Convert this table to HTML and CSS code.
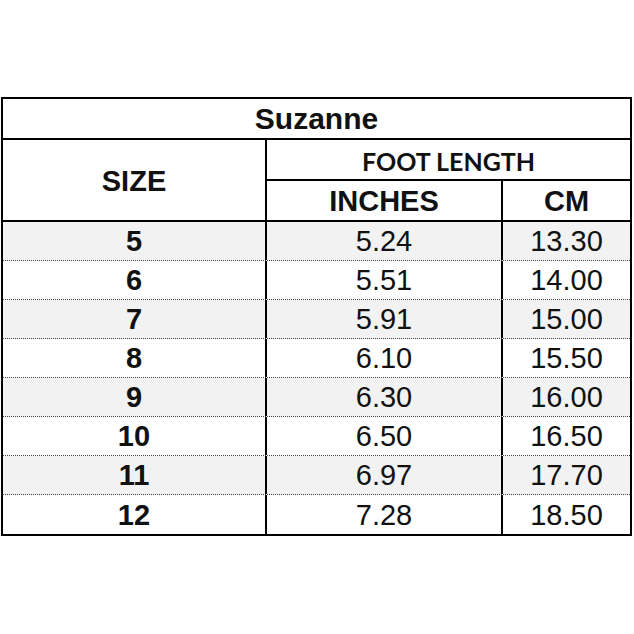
FILE: index.html
```html
<!DOCTYPE html>
<html lang="en">
<head>
<meta charset="utf-8">
<title>Suzanne size chart</title>
<link rel="stylesheet" href="styles.css">
</head>
<body>
<div class="chart">
  <div class="title">Suzanne</div>
  <div class="head">
    <div class="cell size-h">SIZE</div>
    <div class="cell foot-h">FOOT LENGTH</div>
    <div class="cell in-h">INCHES</div>
    <div class="cell cm-h">CM</div>
  </div>
  <div class="rows">
    <div class="row alt"><div class="c1">5</div><div class="c2">5.24</div><div class="c3">13.30</div></div>
    <div class="row"><div class="c1">6</div><div class="c2">5.51</div><div class="c3">14.00</div></div>
    <div class="row alt"><div class="c1">7</div><div class="c2">5.91</div><div class="c3">15.00</div></div>
    <div class="row"><div class="c1">8</div><div class="c2">6.10</div><div class="c3">15.50</div></div>
    <div class="row alt"><div class="c1">9</div><div class="c2">6.30</div><div class="c3">16.00</div></div>
    <div class="row"><div class="c1">10</div><div class="c2">6.50</div><div class="c3">16.50</div></div>
    <div class="row alt"><div class="c1">11</div><div class="c2">6.97</div><div class="c3">17.70</div></div>
    <div class="row"><div class="c1">12</div><div class="c2">7.28</div><div class="c3">18.50</div></div>
  </div>
</div>
</body>
</html>
```
FILE: styles.css
```css
* { box-sizing: border-box; }
html, body { margin: 0; padding: 0; background: #fff; }
body { font-family: "Liberation Sans", Arial, sans-serif; color: #111; }

.chart {
  width: 631px;
  margin: 97px 0 0 1px;
  border: 2px solid #000;
}

.title {
  height: 41px;
  border-bottom: 2px solid #000;
  display: flex;
  align-items: center;
  justify-content: center;
  font-weight: bold;
  font-size: 30px;
}

.head {
  display: grid;
  grid-template-columns: 264px 236px 1fr;
  grid-template-rows: 41px 41px;
}

.cell {
  display: flex;
  align-items: center;
  justify-content: center;
  font-weight: bold;
  font-size: 29px;
  padding-top: 2px;
  border-bottom: 2px solid #000;
}

.size-h { grid-row: 1 / 3; grid-column: 1; border-right: 2px solid #000; }
.foot-h {
  grid-column: 2 / 4;
  font-family: Lato, "Liberation Sans", sans-serif;
  font-size: 25px;
}
.in-h { grid-column: 2; grid-row: 2; border-right: 2px solid #000; }
.cm-h { grid-column: 3; grid-row: 2; }

.row {
  display: grid;
  grid-template-columns: 264px 236px 1fr;
  height: 39px;
  border-bottom: 1px dotted #444;
  font-size: 29px;
  background: #fff;
}
.row:last-child { border-bottom: none; }
.row.alt { background: #f2f2f2; }

.row > div {
  display: flex;
  align-items: center;
  justify-content: center;
  padding-top: 1px;
}
.c1 { font-weight: bold; border-right: 2px solid #000; }
.c2 { border-right: 2px solid #000; }
```
